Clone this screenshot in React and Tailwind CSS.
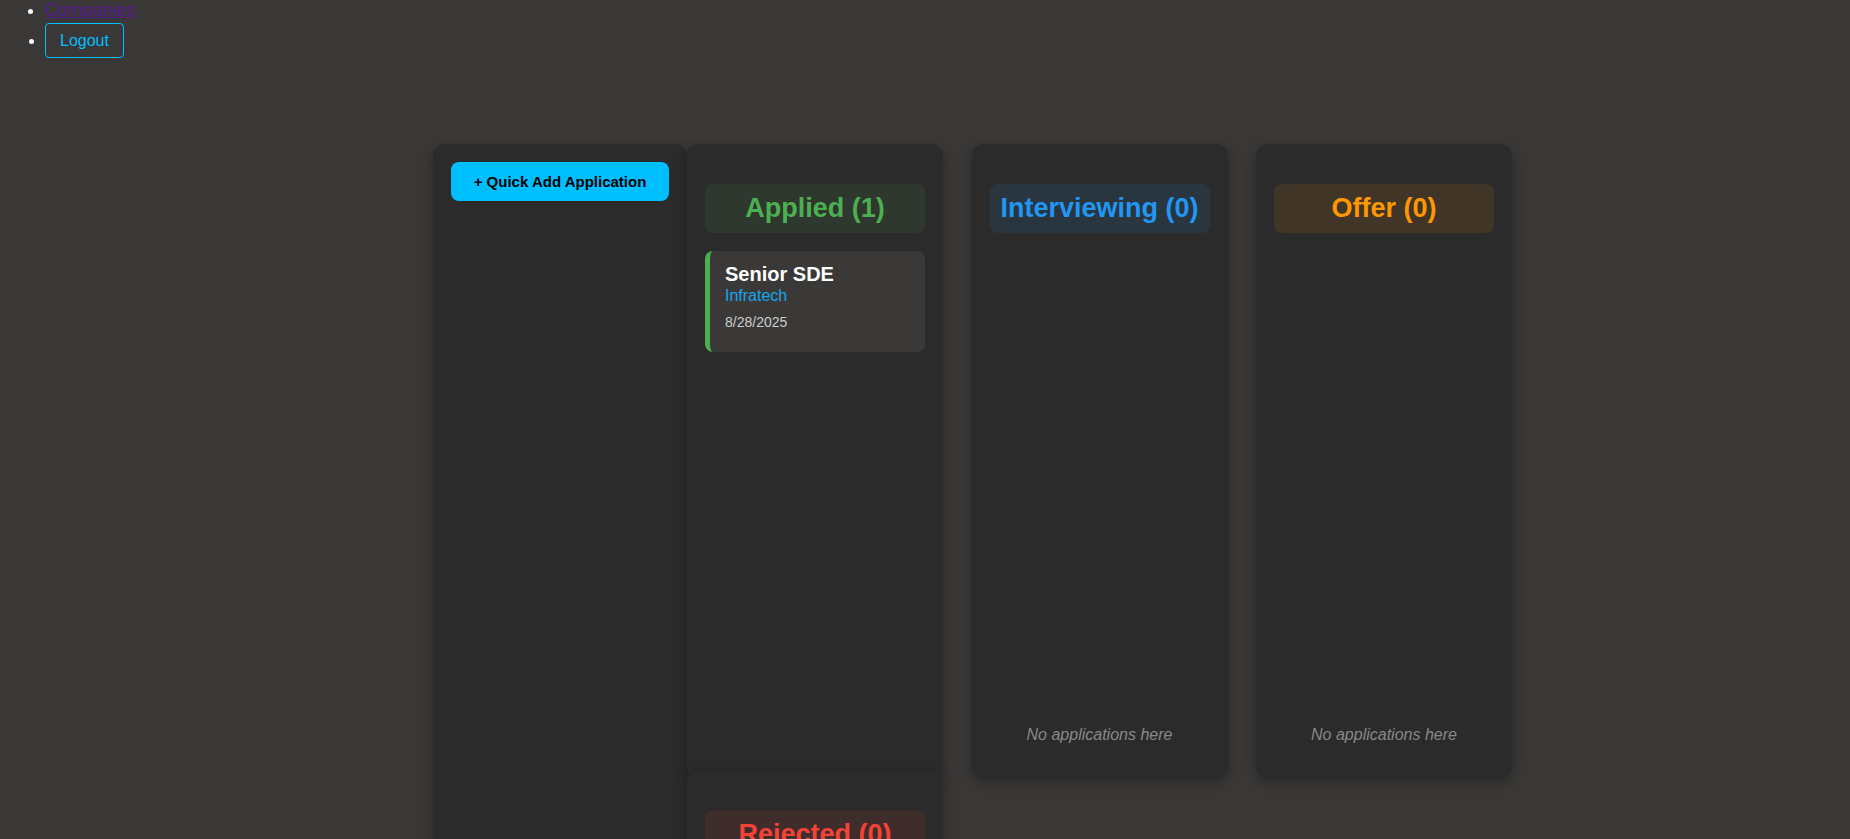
import React from 'react'

const columns = [
  {
    key: 'applied',
    title: 'Applied',
    text: 'text-[#4caf50]',
    bg: 'bg-[#4caf50]/10',
    border: 'border-[#4caf50]',
    items: [{ id: 1, title: 'Senior SDE', company: 'Infratech', date: '8/28/2025' }],
  },
  { key: 'interviewing', title: 'Interviewing', text: 'text-[#2196f3]', bg: 'bg-[#2196f3]/10', border: 'border-[#2196f3]', items: [] },
  { key: 'offer', title: 'Offer', text: 'text-[#ff9800]', bg: 'bg-[#ff9800]/10', border: 'border-[#ff9800]', items: [] },
  { key: 'rejected', title: 'Rejected', text: 'text-[#f44336]', bg: 'bg-[#f44336]/10', border: 'border-[#f44336]', items: [] },
]

function AppCard({ app, border }) {
  return (
    <div className={`bg-[#3a3937] rounded-lg border-l-[5px] ${border} pl-[15px] pr-4 pt-3 pb-[22px]`}>
      <h3 className="text-[20px] leading-[23px] font-bold text-white">{app.title}</h3>
      <p className="mt-[1px] text-[16px] leading-[18px] text-[#14a6ee]">{app.company}</p>
      <p className="mt-[9px] text-[14px] leading-[16px] text-[#cccccc]">{app.date}</p>
    </div>
  )
}

function Column({ col, className = '' }) {
  return (
    <div className={`h-[634px] flex flex-col bg-[#2b2b2b] rounded-xl p-[18px] shadow-[0_4px_12px_rgba(0,0,0,0.3)] ${className}`}>
      <h2 className={`mt-[22px] mb-[18px] py-[9px] rounded-lg text-center font-bold text-[27px] leading-[31px] ${col.bg} ${col.text}`}>
        {col.title} ({col.items.length})
      </h2>
      <div className="flex flex-col gap-3">
        {col.items.map((app) => (
          <AppCard key={app.id} app={app} border={col.border} />
        ))}
      </div>
      {col.items.length === 0 && (
        <p className="mt-auto py-4 text-center italic text-[16px] leading-[18px] text-[#888888]">No applications here</p>
      )}
    </div>
  )
}

export default function App() {
  return (
    <div className="min-h-screen bg-[#3a3836] text-white font-['Liberation_Sans',Arial,sans-serif] overflow-hidden">
      <ul className="list-disc pl-[45px]">
        <li className="text-[18px] leading-[21px]">
          <a href="#" className="text-[#551a8b] underline">Companies</a>
        </li>
        <li className="mt-[2px] text-[16px]">
          <button className="border border-[#00bfff] text-[#00bfff] rounded px-[14px] py-[7px] text-[16px] leading-[19px]">
            Logout
          </button>
        </li>
      </ul>

      <div className="flex pl-[433px] mt-[86px]">
        <aside className="w-[254px] shrink-0 bg-[#2b2b2b] rounded-xl p-[18px] shadow-[0_4px_12px_rgba(0,0,0,0.3)]">
          <button className="w-full bg-[#00bfff] text-black font-bold text-[15px] leading-[17px] py-[11px] rounded-lg">
            + Quick Add Application
          </button>
        </aside>

        <div className="grid grid-cols-[repeat(3,256px)] gap-x-[28.5px] content-start">
          <Column col={columns[0]} />
          <Column col={columns[1]} />
          <Column col={columns[2]} />
          <Column col={columns[3]} className="-mt-2" />
        </div>
      </div>
    </div>
  )
}
